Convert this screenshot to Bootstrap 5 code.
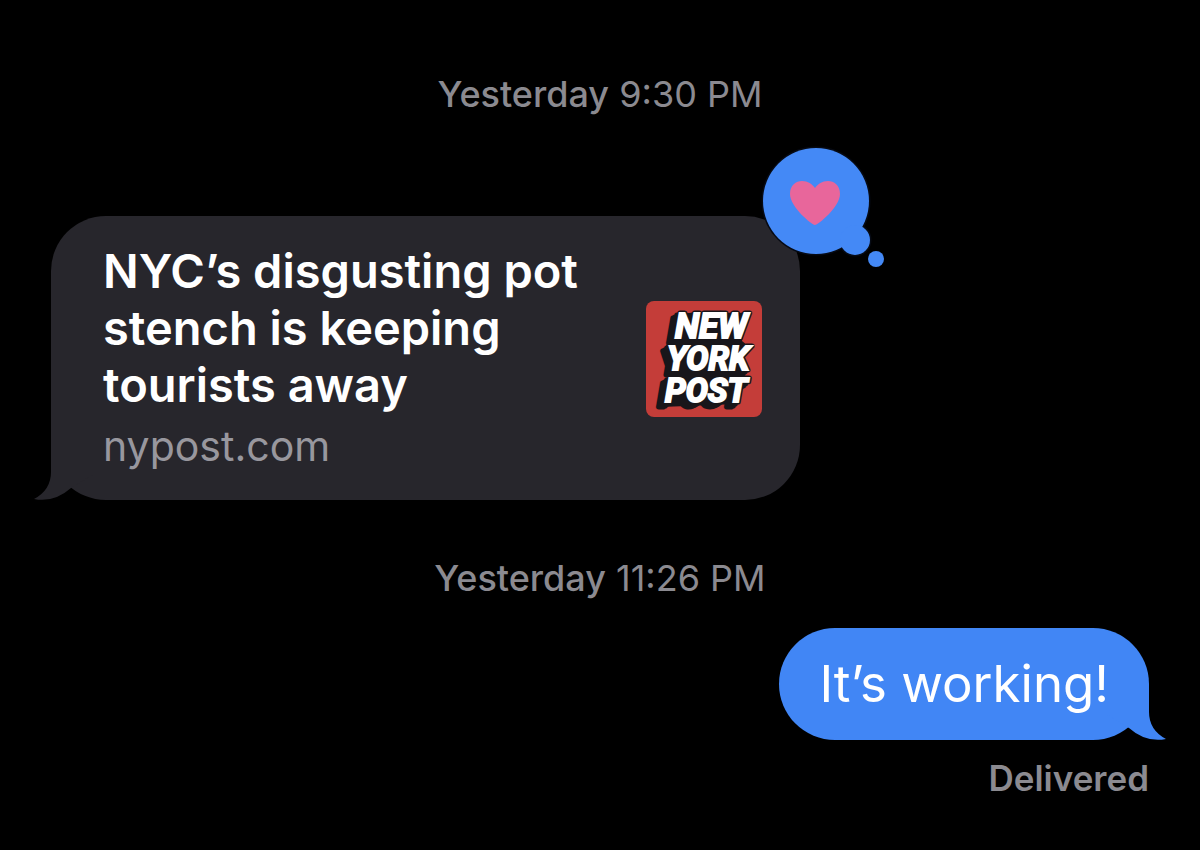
<!DOCTYPE html>
<html lang="en">
<head>
<meta charset="utf-8">
<meta name="viewport" content="width=device-width, initial-scale=1">
<title>Messages</title>
<link href="https://cdn.jsdelivr.net/npm/bootstrap@5.3.0/dist/css/bootstrap.min.css" rel="stylesheet">
<style>
  body { background: #000; color: #fff; font-family: Inter, "Liberation Sans", sans-serif; }
  .thread { padding: 70px 51px 40px; }
  .stamp, .receipt { color: #8b8a90; font-size: 36px; line-height: 48px; }
  .day { font-weight: 500; }
  .bubble-in { width: 749px; max-width: 100%; margin: 98px 0 54px; padding: 26px 38px 25px 52px; border-radius: 55px; background: #27262c; }
  .headline { font-size: 47px; line-height: 57px; }
  .headline-col { flex: 0 1 500px; }
  .domain { color: #98979e; font-size: 41px; line-height: 58px; }
  .bubble-out { margin-top: 26px; padding: 26px 40px; border-radius: 56px; background: #4186f5; font-size: 51px; line-height: 60px; }
  .receipt { margin-top: 14px; font-size: 35px; }
  .tail { position: absolute; bottom: 0; width: 60px; height: 56px; }
  .tail-in { left: -17px; fill: #27262c; }
  .tail-out { right: -17px; fill: #4186f5; }
  .reaction { position: absolute; top: -70px; right: -89px; width: 128px; height: 124px; }
  .logo { width: 116px; height: 116px; }
  .logo text { font-family: Roboto, "Liberation Sans", sans-serif; font-weight: 700; font-style: italic; }
</style>
</head>
<body>
<main class="thread d-flex flex-column">
  <div class="stamp text-center"><span class="day">Yesterday</span> 9:30 PM</div>

  <a href="#" class="bubble-in position-relative d-flex align-items-center justify-content-between text-reset text-decoration-none">
    <svg class="tail tail-in" viewBox="0 0 60 56" aria-hidden="true"><path d="M17 0V28Q17 46 0 55Q20 59 37 44L60 30V0Z"/></svg>
    <div class="headline-col position-relative">
      <div class="headline fw-semibold">NYC’s disgusting pot stench is keeping tourists away</div>
      <div class="domain pt-1">nypost.com</div>
    </div>
    <svg class="logo flex-shrink-0" viewBox="0 0 116 116" role="img" aria-label="New York Post">
      <defs>
        <g id="wordmark">
          <text x="29" y="37" font-size="35">NEW</text>
          <text x="21" y="69" font-size="33">YORK</text>
          <text x="19" y="101" font-size="33">POST</text>
        </g>
      </defs>
      <rect width="116" height="116" rx="8" fill="#c43d39"/>
      <g fill="#18161a" stroke="#18161a" stroke-width="5" stroke-linejoin="round">
        <path stroke="none" d="M32 12L102 12L96 40L101 44L95 72L98 76L92 103L15 106L24 72L20 44L27 38Z"/>
        <use href="#wordmark" x="-7" y="5"/><use href="#wordmark" x="-5" y="4"/><use href="#wordmark" x="-3" y="2"/><use href="#wordmark"/>
      </g>
      <use href="#wordmark" fill="#fff" stroke="#fff" stroke-width="2"/>
    </svg>
    <svg class="reaction" viewBox="0 0 128 124" role="img" aria-label="Loved">
      <g stroke="#060a14" stroke-width="3" fill="#060a14"><circle cx="55" cy="55" r="53"/><circle cx="94" cy="94" r="15"/></g>
      <g fill="#4489f6"><circle cx="55" cy="55" r="53"/><circle cx="94" cy="94" r="15"/><circle cx="115" cy="113" r="8"/></g>
      <path fill="#e8669b" d="M54 79C51 79 29 61 29 48C29 39 35 35 41 35C47 35 51 38 54 42C57 38 61 35 67 35C73 35 79 39 79 48C79 61 57 79 54 79Z"/>
    </svg>
  </a>

  <div class="stamp text-center"><span class="day">Yesterday</span> 11:26 PM</div>

  <div class="bubble-out position-relative align-self-end">
    <svg class="tail tail-out" viewBox="0 0 60 56" aria-hidden="true"><path d="M43 0V28Q43 46 60 55Q40 59 23 44L0 30V0Z"/></svg>
    <span class="position-relative">It’s working!</span>
  </div>
  <div class="receipt align-self-end fw-semibold">Delivered</div>
</main>
<script src="https://cdn.jsdelivr.net/npm/bootstrap@5.3.0/dist/js/bootstrap.bundle.min.js"></script>
</body>
</html>
